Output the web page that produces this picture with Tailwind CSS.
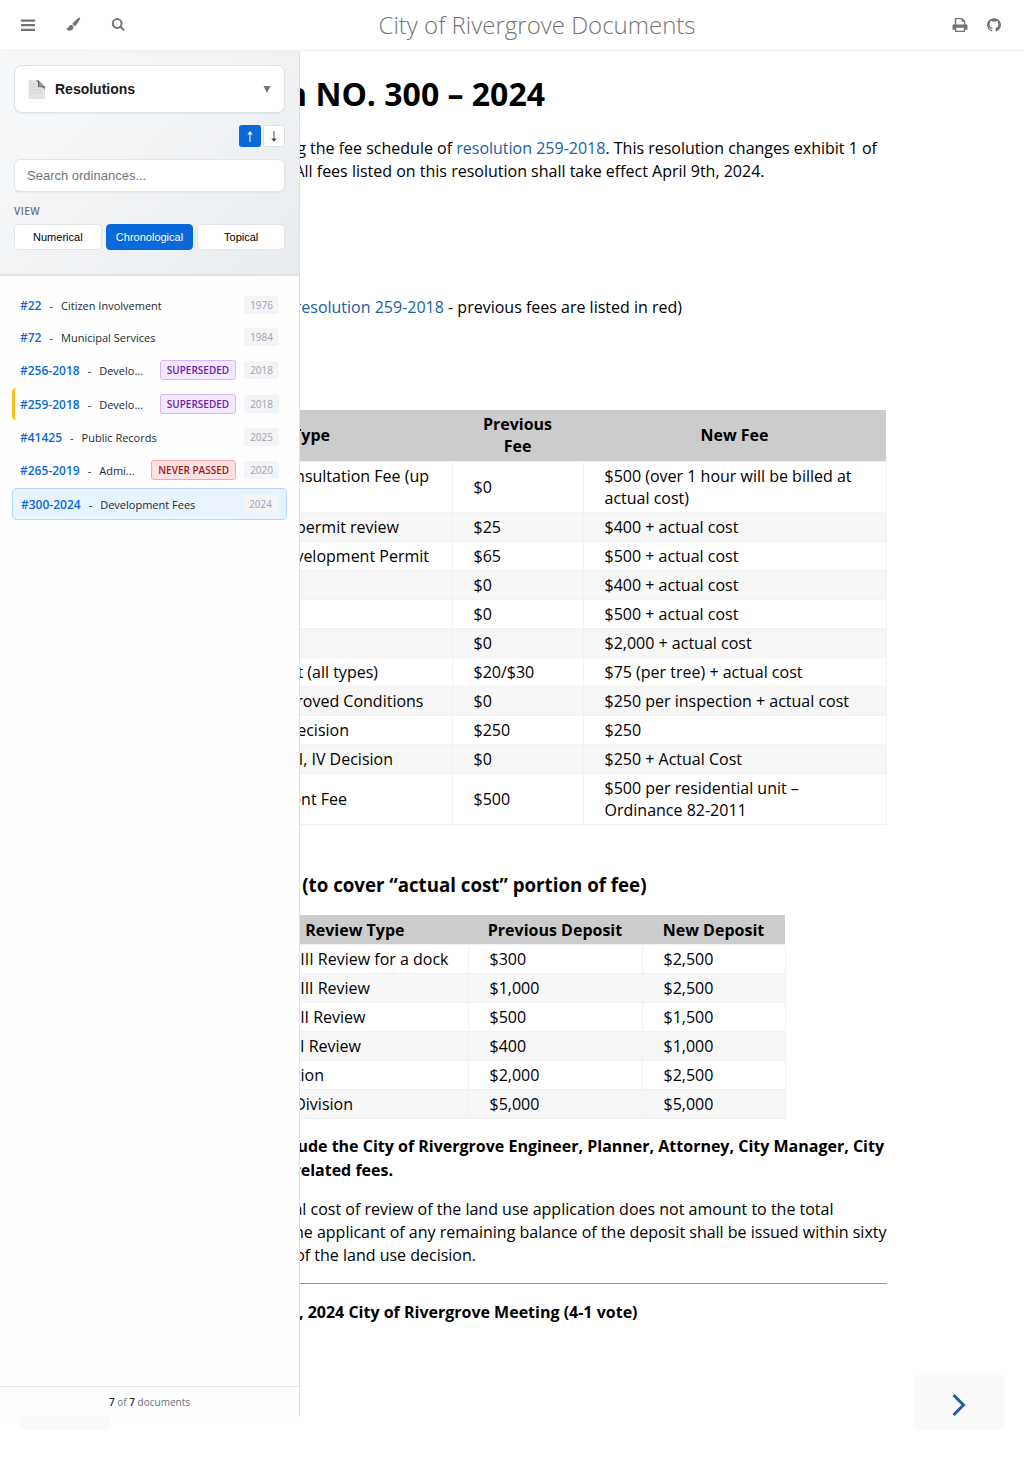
<!DOCTYPE html>
<html lang="en">
<head>
<meta charset="utf-8">
<title>City of Rivergrove Documents</title>
<script src="https://cdn.jsdelivr.net/npm/@tailwindcss/browser@4"></script>
</head>
<body class="bg-white font-['Open_Sans',sans-serif] text-black">
<div class="relative flex h-[1480px] w-[1024px] flex-col overflow-hidden">
  <header class="flex h-[51px] shrink-0 items-center border-b border-[#eeeeee] text-[#747474]">
    <div class="flex w-[300px] items-center pl-[20px]">
      <svg class="h-4 w-4" viewBox="0 0 16 16" fill="currentColor"><path d="M1 2.500h14v2.200H1zM1 7h14v2.200H1zM1 11.700h14v2.200H1z"/></svg>
      <svg class="ml-[30px] h-4 w-4" viewBox="0 0 16 16" fill="currentColor"><path d="M13.800.7c.5.500.4 1.200 0 1.900-1 2-2.300 4-4 5.900-.6.6-1.100.8-1.600.7C8 8.300 7.300 7.600 6.300 7.300c0-.6.300-1.100.8-1.600C8.800 4.100 10.600 2.500 12.400 1c.5-.4 1-.6 1.400-.3zM5.400 7.900c1.200.2 2 1 2.100 2.200.1 2-1.500 3.600-3.700 3.700C1.700 13.900.7 12.800.6 10.600c.6.500 1.100.6 1.500.3C2.800 10.200 2.700 7.700 5.400 7.900z"/></svg>
      <svg class="ml-[29px] h-4 w-4" viewBox="0 0 16 16" fill="none" stroke="currentColor" stroke-width="2"><circle cx="6.200" cy="6.500" r="4.400"/><path d="M9.400 9.700l3.200 3.200" stroke-linecap="round"/></svg>
    </div>
    <div class="w-[474px] text-center text-2xl leading-[50px] font-light">City of Rivergrove Documents</div>
    <div class="flex flex-1 items-center justify-end gap-[18px] pr-[22px]">
      <svg class="h-4 w-4" viewBox="0 0 16 16" fill="currentColor" fill-rule="evenodd"><path d="M2.800 1h7.500l3 3v3.200c1.200 0 2.200.8 2.200 2v3.600h-2.400V15H3v-2.200H.5V9.200c0-1.200 1-2 2.300-2zM4.200 2.300v5.200h7.700V4.700H9.600V2.300zM4.300 10.800v2.900h7.500v-2.900z"/></svg>
      <svg class="h-4 w-4" viewBox="0 0 16 16" fill="currentColor"><path d="M8 1.200a6.800 6.800 0 0 0-2.200 13.300c.4 0 .5-.2.5-.4v-1.300c-1.900.4-2.300-.8-2.300-.8-.3-.8-.8-1-.8-1-.6-.4 0-.4 0-.4.7 0 1.100.7 1.100.7.6 1 1.600.8 2 .6 0-.5.200-.8.400-.9-1.500-.2-3.100-.8-3.100-3.400 0-.7.300-1.300.7-1.800 0-.2-.3-.9.100-1.800 0 0 .6-.2 1.900.7a6.500 6.500 0 0 1 3.400 0c1.300-.9 1.900-.7 1.900-.7.4.9.100 1.600.1 1.800.4.500.7 1.100.7 1.800 0 2.600-1.600 3.200-3.100 3.400.2.200.4.600.4 1.200v1.900c0 .2.100.4.500.4A6.800 6.800 0 0 0 8 1.200z"/></svg>
    </div>
  </header>

  <div class="flex">
    <aside class="flex h-[1366px] w-[300px] shrink-0 flex-col border-r border-[#dee2e6] bg-[#fefefe]">
      <div class="h-[225px] border-b-2 border-[#dee2e6] bg-linear-135 from-[#f8f9fa] to-[#e9ecef] px-[14px] pt-[14px]">
        <div class="flex h-[48px] items-center rounded-lg border border-[#dde1e9] bg-white pr-[13px] pl-[12px] shadow-xs">
          <svg class="h-[22px] w-[20px]" viewBox="0 0 20 22"><path d="M1.500 2h8.500l8 7.500v11.500H1.500z" fill="#e3e3e3"/><path d="M3.500 6h6M3.500 9h7M3.500 12h11M3.500 15h11" stroke="#d2d2d2" stroke-width=".8"/><path d="M9 2c2 1 2.500 3.500 2 7.500 3-1 5.500-.5 7 2L18 9 11.500 2.500z" fill="#555"/><path d="M11.500 2.500L18 9c-2-1-4-1-6 0 .5-2 .5-4.500-.5-6.500z" fill="#999"/></svg>
          <span class="ml-2 flex-1 font-['Liberation_Sans',sans-serif] text-sm font-bold text-[#1a1a1a]">Resolutions</span>
          <svg class="h-2 w-2" viewBox="0 0 8 8"><path d="M.5 1h7L4 8z" fill="#6b7280"/></svg>
        </div>
        <div class="mt-3 flex justify-end gap-[2px] text-[#495057]">
          <div class="flex h-[22px] w-[22px] items-center justify-center rounded-[3px] bg-[#0969da] text-white"><svg class="h-3 w-2" viewBox="0 0 8 12" fill="none" stroke="currentColor"><path d="M4 12V2"/><path d="M1.300 4.500L4 1l2.700 3.500z" fill="currentColor" stroke="none"/></svg></div>
          <div class="flex h-[22px] w-[22px] items-center justify-center rounded-[3px] border border-[#dee2e6] bg-white"><svg class="h-3 w-2" viewBox="0 0 8 12" fill="none" stroke="currentColor"><path d="M4 1v9"/><path d="M1.300 8.500L4 12l2.700-3.500z" fill="currentColor" stroke="none"/></svg></div>
        </div>
        <div class="mt-3 flex h-[33px] items-center rounded-md border border-[#e1e4e8] bg-white px-3 font-['Liberation_Sans',sans-serif] text-[13px] text-[#757575] shadow-xs">Search ordinances...</div>
        <div class="mt-[12px] text-[10px] leading-[14px] font-semibold tracking-[0.5px] text-[#6b7280]">VIEW</div>
        <div class="mt-[6px] grid grid-cols-3 gap-1 text-center font-['Liberation_Sans',sans-serif] text-[11px] leading-[24px]">
          <div class="rounded border border-[#e1e4e8] bg-white">Numerical</div>
          <div class="rounded border border-[#0969da] bg-[#0969da] text-white">Chronological</div>
          <div class="rounded border border-[#e1e4e8] bg-white">Topical</div>
        </div>
      </div>

      <div class="flex flex-1 flex-col gap-[2px] px-[12px] pt-[14px] text-[11px] text-[#24292e]">
        <div class="flex h-[30px] items-center px-2"><b class="pt-[2px] text-xs font-semibold text-[#0969da]">#22</b><span class="mx-2 pt-[2px]">-</span><span class="flex-1 pt-[2px]">Citizen Involvement</span><span class="rounded-[3px] bg-[#f3f4f6] px-[6px] text-[10px] leading-[18px] text-[#9ca3af]">1976</span></div>
        <div class="flex h-[30px] items-center px-2"><b class="pt-[2px] text-xs font-semibold text-[#0969da]">#72</b><span class="mx-2 pt-[2px]">-</span><span class="flex-1 pt-[2px]">Municipal Services</span><span class="rounded-[3px] bg-[#f3f4f6] px-[6px] text-[10px] leading-[18px] text-[#9ca3af]">1984</span></div>
        <div class="flex h-[32px] items-center px-2"><b class="pt-[2px] text-xs font-semibold text-[#0969da]">#256-2018</b><span class="mx-2 pt-[2px]">-</span><span class="flex-1 pt-[2px]">Develo...</span><span class="mr-2 rounded-[3px] border border-[#d8b4fe] bg-[#f3e8ff] px-[6px] text-[10px] leading-[18px] font-semibold text-[#6b21a8]">SUPERSEDED</span><span class="rounded-[3px] bg-[#f3f4f6] px-[6px] text-[10px] leading-[18px] text-[#9ca3af]">2018</span></div>
        <div class="flex h-[32px] items-center rounded border-l-[3px] border-[#fbbf24] pr-2 pl-[5px]"><b class="pt-[2px] text-xs font-semibold text-[#0969da]">#259-2018</b><span class="mx-2 pt-[2px]">-</span><span class="flex-1 pt-[2px]">Develo...</span><span class="mr-2 rounded-[3px] border border-[#d8b4fe] bg-[#f3e8ff] px-[6px] text-[10px] leading-[18px] font-semibold text-[#6b21a8]">SUPERSEDED</span><span class="rounded-[3px] bg-[#f3f4f6] px-[6px] text-[10px] leading-[18px] text-[#9ca3af]">2018</span></div>
        <div class="flex h-[30px] items-center px-2"><b class="pt-[2px] text-xs font-semibold text-[#0969da]">#41425</b><span class="mx-2 pt-[2px]">-</span><span class="flex-1 pt-[2px]">Public Records</span><span class="rounded-[3px] bg-[#f3f4f6] px-[6px] text-[10px] leading-[18px] text-[#9ca3af]">2025</span></div>
        <div class="flex h-[32px] items-center px-2"><b class="pt-[2px] text-xs font-semibold text-[#0969da]">#265-2019</b><span class="mx-2 pt-[2px]">-</span><span class="flex-1 pt-[2px]">Admi...</span><span class="mr-2 rounded-[3px] border border-[#fca5a5] bg-[#fee2e2] px-[6px] text-[10px] leading-[18px] font-semibold text-[#991b1b]">NEVER PASSED</span><span class="rounded-[3px] bg-[#f3f4f6] px-[6px] text-[10px] leading-[18px] text-[#9ca3af]">2020</span></div>
        <div class="flex h-[32px] items-center rounded border border-[#b6daff] bg-[#e7f3ff] px-2"><b class="pt-[2px] text-xs font-semibold text-[#0969da]">#300-2024</b><span class="mx-2 pt-[2px]">-</span><span class="flex-1 pt-[2px]">Development Fees</span><span class="rounded-[3px] bg-[#f3f4f6] px-[6px] text-[10px] leading-[18px] text-[#9ca3af]">2024</span></div>
      </div>
      <div class="h-[31px] border-t border-[#e1e4e8] text-center text-[10px] leading-[30px] text-[#6b7280]"><b class="font-semibold text-[#24292e]">7</b> of <b class="font-semibold text-[#24292e]">7</b> documents</div>
    </aside>

    <main class="w-[588px] overflow-hidden text-base leading-[23.2px] whitespace-nowrap">
      <h1 class="mt-[20px] flex h-[46px] w-[245px] justify-end text-[32px] leading-[46px] font-bold"><span>Resolution NO. 300 – 2024</span></h1>
      <div class="mt-[20px] flex w-[577px] justify-end"><span>amending the fee schedule of <a class="text-[#20609f]">resolution 259-2018</a>. This resolution changes exhibit 1 of</span></div>
      <div class="flex w-[464.500px] justify-end"><span>All fees listed on this resolution shall take effect April 9th, 2024.</span></div>
      <div class="mt-[113px] flex w-[382px] justify-end"><span><a class="text-[#20609f]">resolution 259-2018</a> - previous fees are listed in red)</span></div>

      <table class="mt-[90px] w-[586px] table-fixed border-collapse leading-[22px]">
        <colgroup><col class="w-[152px]"><col class="w-[131px]"><col class="w-[303px]"></colgroup>
        <thead class="bg-[#cccccc] font-bold">
          <tr class="h-[52px]"><td><div class="flex w-[30px] justify-end"><span>Type</span></div></td><td class="text-center">Previous<br>Fee</td><td class="text-center">New Fee</td></tr>
        </thead>
        <tbody class="[&_td]:border [&_td]:border-[#f2f2f2] [&_td]:py-[3px] [&_td+td]:pr-5 [&_td+td]:pl-[21px] [&_tr>td:first-child]:border-l-0 [&_tr:nth-child(even)]:bg-[#f7f7f7]">
          <tr><td><div class="flex h-11 w-[129px] justify-end"><span>Consultation Fee (up</span></div></td><td>$0</td><td>$500 (over 1 hour will be billed at<br>actual cost)</td></tr>
          <tr><td><div class="flex w-[99px] justify-end"><span>permit review</span></div></td><td>$25</td><td>$400 + actual cost</td></tr>
          <tr><td><div class="flex w-[129px] justify-end"><span>Development Permit</span></div></td><td>$65</td><td>$500 + actual cost</td></tr>
          <tr><td></td><td>$0</td><td>$400 + actual cost</td></tr>
          <tr><td></td><td>$0</td><td>$500 + actual cost</td></tr>
          <tr><td></td><td>$0</td><td>$2,000 + actual cost</td></tr>
          <tr><td><div class="flex w-[78px] justify-end"><span>Permit (all types)</span></div></td><td>$20/$30</td><td>$75 (per tree) + actual cost</td></tr>
          <tr><td><div class="flex w-[123.500px] justify-end"><span>Approved Conditions</span></div></td><td>$0</td><td>$250 per inspection + actual cost</td></tr>
          <tr><td><div class="flex w-[49px] justify-end"><span>Decision</span></div></td><td>$250</td><td>$250</td></tr>
          <tr><td><div class="flex w-[93px] justify-end"><span>III, IV Decision</span></div></td><td>$0</td><td>$250 + Actual Cost</td></tr>
          <tr><td><div class="flex w-[47px] justify-end"><span>Development Fee</span></div></td><td>$500</td><td>$500 per residential unit –<br>Ordinance 82-2011</td></tr>
        </tbody>
      </table>

      <h3 class="mt-[46px] flex h-[27px] w-[346.500px] justify-end text-[18.72px] leading-[27px] font-bold"><span>(to cover “actual cost” portion of fee)</span></h3>

      <table class="mt-[17px] w-[485px] table-fixed border-collapse leading-[22px]">
        <colgroup><col class="w-[168px]"><col class="w-[174px]"><col class="w-[143px]"></colgroup>
        <thead class="bg-[#cccccc] font-bold">
          <tr class="h-[29px]"><td class="pt-[2px]"><div class="flex w-[104.500px] justify-end"><span>Review Type</span></div></td><td class="pt-[2px] text-center">Previous Deposit</td><td class="pt-[2px] text-center">New Deposit</td></tr>
        </thead>
        <tbody class="[&_td]:border [&_td]:border-[#f2f2f2] [&_td]:py-[3px] [&_td+td]:pr-5 [&_td+td]:pl-[21px] [&_tr>td:first-child]:border-l-0 [&_tr:nth-child(even)]:bg-[#f7f7f7]">
          <tr><td><div class="flex w-[148.500px] justify-end"><span>III Review for a dock</span></div></td><td>$300</td><td>$2,500</td></tr>
          <tr><td><div class="flex w-[70px] justify-end"><span>III Review</span></div></td><td>$1,000</td><td>$2,500</td></tr>
          <tr><td><div class="flex w-[65.500px] justify-end"><span>II Review</span></div></td><td>$500</td><td>$1,500</td></tr>
          <tr><td><div class="flex w-[61px] justify-end"><span>I Review</span></div></td><td>$400</td><td>$1,000</td></tr>
          <tr><td><div class="flex w-[24px] justify-end"><span>Partition</span></div></td><td>$2,000</td><td>$2,500</td></tr>
          <tr><td><div class="flex w-[53px] justify-end"><span>Division</span></div></td><td>$5,000</td><td>$5,000</td></tr>
        </tbody>
      </table>

      <div class="mt-[16px] flex w-[584px] justify-end font-bold"><span>include the City of Rivergrove Engineer, Planner, Attorney, City Manager, City</span></div>
      <div class="mt-px flex w-[93px] justify-end font-bold"><span>related fees.</span></div>
      <div class="mt-[16px] flex w-[533.500px] justify-end"><span>actual cost of review of the land use application does not amount to the total</span></div>
      <div class="flex w-[586.500px] justify-end"><span>the applicant of any remaining balance of the deposit shall be issued within sixty</span></div>
      <div class="flex w-[176px] justify-end"><span>of the land use decision.</span></div>
      <hr class="mt-[15px] w-[587px] border-t border-[#999999]">
      <div class="mt-[17px] flex w-[337.500px] justify-end font-bold"><span>, 2024 City of Rivergrove Meeting (4-1 vote)</span></div>
    </main>
  </div>

  <div class="ml-[20px] h-[13px] w-[90px] rounded-b-[5px] bg-[#fafafa]"></div>
  <div class="absolute top-[1375px] left-[914px] flex h-[55px] w-[90px] items-center justify-center rounded-[5px] bg-[#fafafa] pt-[5px] text-[#20609f]">
    <svg class="h-6 w-4" viewBox="0 0 16 24" fill="none" stroke="currentColor" stroke-width="3"><path d="M2.500 2L12.500 12 2.500 22"/></svg>
  </div>
</div>
</body>
</html>
